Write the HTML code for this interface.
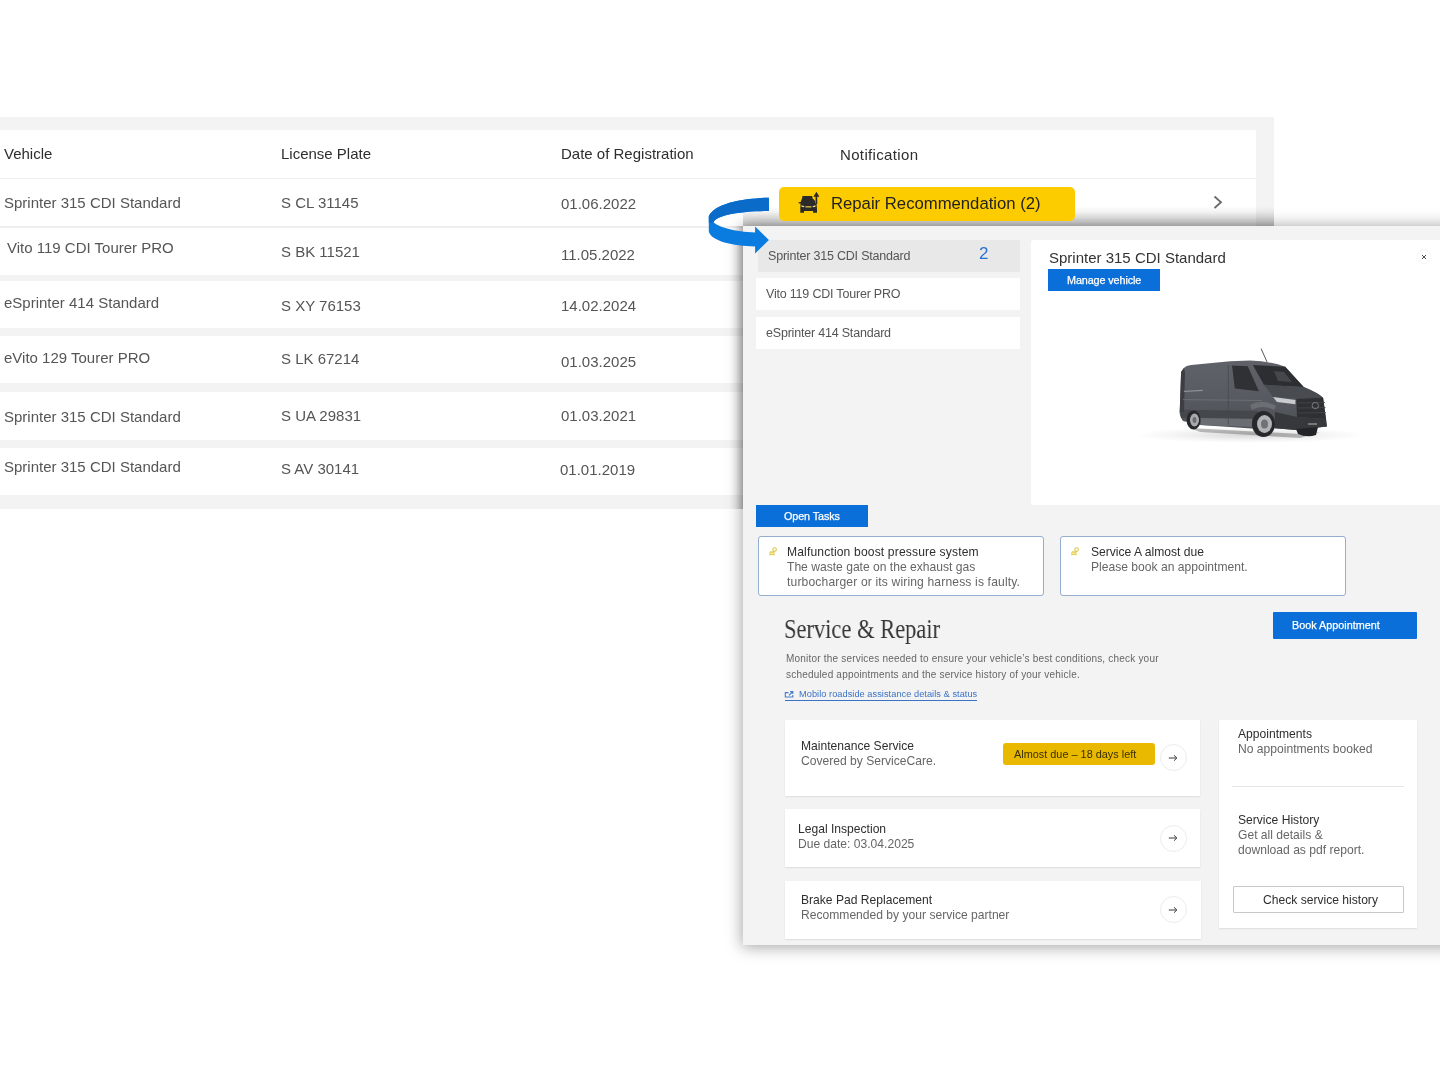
<!DOCTYPE html>
<html><head><meta charset="utf-8">
<style>
*{margin:0;padding:0;box-sizing:border-box}
html,body{width:1440px;height:1080px;overflow:hidden;background:#fff}
body{position:relative;font-family:"Liberation Sans",sans-serif;color:#333}
.a{position:absolute}
.t{position:absolute;white-space:pre;line-height:1;will-change:transform}
.bx{position:absolute}
/* table */
#band{left:0;top:117px;width:1274px;height:392px;background:#f3f3f3}
.row{position:absolute;left:0;width:1256px;background:#fff}
.hd{font-size:15px;color:#2e2e2e}
.cell{font-size:15px;color:#555}
/* popup */
#pop{z-index:1;left:743px;top:226px;width:760px;height:719px;background:#f3f3f3;box-shadow:0 1px 15px 1px rgba(0,0,0,.36)}
.li{position:absolute;background:#fff}
.lt{font-size:12.5px;letter-spacing:-.2px;color:#555}
.btn{position:absolute;background:#0a6fd8}
.bt{font-size:10.8px;letter-spacing:-.1px;font-weight:400;color:#fff;-webkit-text-stroke:.25px #fff}
.card{position:absolute;background:#fff;box-shadow:0 1px 1.5px rgba(0,0,0,.09)}
.ct{font-size:12.1px;color:#2e2e2e}
.cs{font-size:12.1px;color:#666}
.circ{position:absolute;width:27px;height:27px;border-radius:50%;border:1px solid #ececec;background:#fff}
</style></head><body>

<div class="bx" id="band"></div>
<div class="row" style="top:130px;height:48px"></div>
<div class="row" style="top:177.5px;height:2px;background:#eeeeee"></div>
<div class="row" style="top:179px;height:48px"></div>
<div class="row" style="top:226px;height:2px;background:#efefef"></div>
<div class="row" style="top:228px;height:47px"></div>
<div class="row" style="top:281px;height:46.5px"></div>
<div class="row" style="top:336px;height:47px"></div>
<div class="row" style="top:392px;height:47.5px"></div>
<div class="row" style="top:448px;height:46.5px"></div>

<!-- header -->
<div class="t hd" style="left:4px;top:146px">Vehicle</div>
<div class="t hd" style="left:281px;top:146px">License Plate</div>
<div class="t hd" style="left:561px;top:146px">Date of Registration</div>
<div class="t hd" style="left:840px;top:147px;letter-spacing:.35px">Notification</div>

<!-- rows -->
<div class="t cell" style="left:4px;top:194.5px">Sprinter 315 CDI Standard</div>
<div class="t cell" style="left:281px;top:194.5px">S CL 31145</div>
<div class="t cell" style="left:561px;top:196px">01.06.2022</div>

<div class="t cell" style="left:6.5px;top:239.8px">Vito 119 CDI Tourer PRO</div>
<div class="t cell" style="left:281px;top:243.7px">S BK 11521</div>
<div class="t cell" style="left:561px;top:247px">11.05.2022</div>

<div class="t cell" style="left:4px;top:295px">eSprinter 414 Standard</div>
<div class="t cell" style="left:281px;top:298px">S XY 76153</div>
<div class="t cell" style="left:561px;top:298px">14.02.2024</div>

<div class="t cell" style="left:4px;top:350px">eVito 129 Tourer PRO</div>
<div class="t cell" style="left:281px;top:350.5px">S LK 67214</div>
<div class="t cell" style="left:561px;top:353.8px">01.03.2025</div>

<div class="t cell" style="left:4px;top:409px">Sprinter 315 CDI Standard</div>
<div class="t cell" style="left:281px;top:408px">S UA 29831</div>
<div class="t cell" style="left:561px;top:407.8px">01.03.2021</div>

<div class="t cell" style="left:4px;top:459px">Sprinter 315 CDI Standard</div>
<div class="t cell" style="left:281px;top:460.7px">S AV 30141</div>
<div class="t cell" style="left:560px;top:461.8px">01.01.2019</div>

<!-- chevron -->
<svg class="a" style="left:1210px;top:193px" width="16" height="18" viewBox="0 0 16 18"><path d="M4.5 3.5 L11 9.2 L4.5 15" fill="none" stroke="#6a6a6a" stroke-width="1.8"/></svg>

<!-- popup -->
<div class="bx" style="left:730px;top:226px;width:13px;height:283px;background:linear-gradient(90deg,rgba(0,0,0,0) 0%,rgba(0,0,0,.05) 45%,rgba(0,0,0,.17) 85%,rgba(0,0,0,.22) 100%);z-index:1"></div>
<div class="bx" style="left:743px;top:206px;width:531px;height:20px;background:linear-gradient(180deg,rgba(0,0,0,0) 0%,rgba(0,0,0,.03) 25%,rgba(0,0,0,.08) 45%,rgba(0,0,0,.17) 80%,rgba(0,0,0,.23) 100%);z-index:1"></div>
<div class="bx" id="pop"></div>


<!-- popup contents -->
<div class="li" style="left:758px;top:239.5px;width:262px;height:32.5px;background:#e8e8e8;z-index:2"></div>
<div class="li" style="left:755.5px;top:277.5px;width:264.5px;height:32.5px;z-index:2"></div>
<div class="li" style="left:755.5px;top:316.5px;width:264.5px;height:32.5px;z-index:2"></div>
<div class="t lt" style="left:768px;top:249.6px;z-index:3">Sprinter 315 CDI Standard</div>
<div class="t lt" style="left:765.5px;top:288.2px;z-index:3">Vito 119 CDI Tourer PRO</div>
<div class="t lt" style="left:765.5px;top:326.7px;z-index:3">eSprinter 414 Standard</div>
<div class="t" style="left:979px;top:245.4px;font-size:17px;color:#2a72cf;z-index:3">2</div>

<div class="bx" style="left:1030.5px;top:239.5px;width:420px;height:265.5px;background:#fff;border-radius:3px;z-index:2"></div>
<div class="t" style="left:1049px;top:249.6px;font-size:15px;color:#333;z-index:3">Sprinter 315 CDI Standard</div>
<div class="btn" style="left:1048px;top:269.3px;width:112px;height:21.4px;z-index:3"></div>
<div class="t bt" style="left:1067px;top:274.6px;z-index:4">Manage vehicle</div>
<div class="bx" style="left:1417px;top:249px;width:14px;height:15px;border-radius:50%;border:1px solid #f6f6f6;z-index:3"></div>
<svg class="a" style="left:1419px;top:251.5px;z-index:4" width="10" height="10" viewBox="0 0 10 10"><path d="M3 3 L7 7 M7 3 L3 7" stroke="#3a3a3a" stroke-width=".9"/></svg>

<div class="btn" style="left:755.5px;top:504.5px;width:112.5px;height:22.3px;z-index:2"></div>
<div class="t bt" style="left:783.8px;top:510.5px;z-index:3">Open Tasks</div>

<div class="bx" style="left:757.5px;top:536.3px;width:286.5px;height:59.5px;background:#fff;border:1px solid #95adcf;border-radius:3px;z-index:2"></div>
<div class="bx" style="left:1059.7px;top:536.3px;width:286px;height:59.5px;background:#fff;border:1px solid #95adcf;border-radius:3px;z-index:2"></div>
<div class="t ct" style="left:787.4px;top:546.2px;letter-spacing:.15px;z-index:3">Malfunction boost pressure system</div>
<div class="t cs" style="left:787.4px;top:561.1px;z-index:3">The waste gate on the exhaust gas</div>
<div class="t cs" style="left:787.4px;top:576.3px;letter-spacing:.15px;z-index:3">turbocharger or its wiring harness is faulty.</div>
<div class="t ct" style="left:1091.3px;top:546.2px;z-index:3">Service A almost due</div>
<div class="t cs" style="left:1091.3px;top:561.1px;z-index:3">Please book an appointment.</div>

<div class="t" style="left:783.6px;top:614.6px;font-family:'Liberation Serif',serif;font-size:28px;color:#363636;transform:scaleX(.803);transform-origin:0 0;z-index:3">Service &amp; Repair</div>
<div class="t" style="left:785.6px;top:653.5px;font-size:10px;letter-spacing:.2px;color:#666;z-index:3">Monitor the services needed to ensure your vehicle’s best conditions, check your</div>
<div class="t" style="left:785.6px;top:669.9px;font-size:10px;letter-spacing:.2px;color:#666;z-index:3">scheduled appointments and the service history of your vehicle.</div>
<div class="t" style="left:799.2px;top:689.9px;font-size:9.2px;letter-spacing:.06px;color:#3a72c4;z-index:3">Mobilo roadside assistance details &amp; status</div>
<div class="bx" style="left:785px;top:699.5px;width:192px;height:1px;background:#3a72c4;z-index:3"></div>

<div class="btn" style="left:1273px;top:611.5px;width:144px;height:27.3px;border-radius:1px;z-index:2"></div>
<div class="t bt" style="left:1292px;top:619.7px;letter-spacing:0;z-index:3">Book Appointment</div>

<div class="card" style="left:784.7px;top:719.8px;width:415.8px;height:76.3px;z-index:2"></div>
<div class="card" style="left:784.7px;top:809px;width:415.8px;height:58px;z-index:2"></div>
<div class="card" style="left:785px;top:880.7px;width:415.5px;height:58px;z-index:2"></div>
<div class="card" style="left:1218.7px;top:719.6px;width:198.5px;height:208px;z-index:2"></div>

<div class="t ct" style="left:800.8px;top:739.9px;z-index:3">Maintenance Service</div>
<div class="t cs" style="left:800.8px;top:754.9px;z-index:3">Covered by ServiceCare.</div>
<div class="bx" style="left:1002.5px;top:743.2px;width:152.5px;height:21.5px;background:#e9b900;border-radius:3px;z-index:3"></div>
<div class="t" style="left:1013.6px;top:748.7px;font-size:10.9px;color:#3a3000;z-index:4">Almost due – 18 days left</div>
<div class="circ" style="left:1159.5px;top:744.2px;z-index:3"></div>
<div class="t ct" style="left:797.6px;top:822.6px;z-index:3">Legal Inspection</div>
<div class="t cs" style="left:797.6px;top:837.5px;z-index:3">Due date: 03.04.2025</div>
<div class="circ" style="left:1159.5px;top:824.5px;z-index:3"></div>
<div class="t ct" style="left:800.9px;top:893.7px;z-index:3">Brake Pad Replacement</div>
<div class="t cs" style="left:800.9px;top:908.7px;z-index:3">Recommended by your service partner</div>
<div class="circ" style="left:1159.5px;top:895.9px;z-index:3"></div>

<div class="t ct" style="left:1237.9px;top:727.9px;z-index:3">Appointments</div>
<div class="t cs" style="left:1237.9px;top:742.8px;z-index:3">No appointments booked</div>
<div class="bx" style="left:1232px;top:786.2px;width:171.5px;height:1px;background:#e6e6e6;z-index:3"></div>
<div class="t ct" style="left:1237.9px;top:813.7px;z-index:3">Service History</div>
<div class="t cs" style="left:1237.9px;top:828.6px;z-index:3">Get all details &amp;</div>
<div class="t cs" style="left:1237.9px;top:844px;z-index:3">download as pdf report.</div>
<div class="bx" style="left:1232.6px;top:886px;width:171.2px;height:27.4px;border:1px solid #c9c9c9;border-radius:1px;z-index:3"></div>
<div class="t ct" style="left:1263.2px;top:893.6px;z-index:4">Check service history</div>


<!-- van -->
<svg class="a" style="left:1120px;top:340px;z-index:3" width="250" height="115" viewBox="1120 340 250 115">
<defs>
<radialGradient id="shd" cx="0.5" cy="0.5" r="0.5"><stop offset="0" stop-color="#000" stop-opacity=".55"/><stop offset=".6" stop-color="#000" stop-opacity=".18"/><stop offset="1" stop-color="#000" stop-opacity="0"/></radialGradient>
<linearGradient id="body" x1="0" y1="0" x2="0" y2="1"><stop offset="0" stop-color="#5f6268"/><stop offset=".5" stop-color="#585b61"/><stop offset="1" stop-color="#4c4f54"/></linearGradient>
</defs>
<ellipse cx="1250" cy="435" rx="115" ry="8" fill="url(#shd)" opacity=".28"/>
<path d="M1190 428 L1300 434 L1320 432 L1300 438 L1200 432 Z" fill="#000" opacity=".25"/>
<!-- antenna -->
<path d="M1261.1 348.7 L1267.1 362.1" stroke="#555" stroke-width="1"/>
<!-- side body -->
<path d="M1183.9 368.1 Q1186 365.5 1191.3 364.9 L1230 361.2 L1250 360.4 Q1270 361 1285.2 366.8 L1303.7 387.1 Q1318 393 1323.1 397.8 L1326 419 L1326.9 426.5 L1296 430 L1275 428.3 L1252 428.5 L1200.5 425 L1183 421 Q1179.5 416 1179.7 412.6 L1181.1 372 Z" fill="url(#body)"/>
<!-- lower darker band -->
<path d="M1181 409.8 L1258 411 L1258 418.5 L1181 418.1 Z" fill="#44474c"/>
<path d="M1200 418 L1252 419 L1252 427 L1200.5 425 Z" fill="#6a6d72"/>
<!-- rear panel darker edge -->
<path d="M1181.1 372 L1183.9 368.1 L1185 372 L1184 412 L1179.7 412.6 Z" fill="#3c3e42"/>
<!-- character line -->
<path d="M1183 399.6 L1262 400.5" stroke="#6e7176" stroke-width=".9"/>
<path d="M1228.3 365 L1228.3 425" stroke="#45484c" stroke-width=".7"/>
<path d="M1183.9 391.3 L1202.9 390.4" stroke="#8d9095" stroke-width="1.3"/>
<!-- side window -->
<path d="M1232 365.4 L1247.8 366.3 L1258.9 391.3 L1234.8 388.5 Z" fill="#2f3135"/>
<!-- windshield -->
<path d="M1252.8 364.9 L1285.2 366.8 L1303.7 387.1 L1263.9 384.8 Z" fill="#2c2e32"/>
<path d="M1274 371 L1284 372 L1292 382 L1278 381 Z" fill="#45474b"/>
<!-- hood -->
<path d="M1263.9 384.8 L1303.7 387.1 Q1318 393 1323.1 397.8 L1296.3 398.7 L1273 396.9 Z" fill="#484b50"/>
<!-- fender highlight -->
<path d="M1250 405 Q1262 398 1276 406 L1274 410 Q1262 404 1252 410 Z" fill="#6b6e73"/>
<!-- headlight -->
<path d="M1273 396.9 L1295.4 400 L1295.4 404.3 L1277 402 Z" fill="#c9cbce"/>
<!-- grille -->
<path d="M1296.3 398.7 L1323.1 397.8 L1326 419 L1297 417 Z" fill="#2e3034"/>
<path d="M1298 403 L1325 402.5 M1298 408 L1325.5 407.5 M1298 413 L1325.8 412.5" stroke="#45474b" stroke-width=".8"/>
<circle cx="1315.3" cy="405.6" r="3.2" fill="none" stroke="#8a8c90" stroke-width=".8"/>
<!-- front bumper -->
<path d="M1275 412 L1297 417 L1326 419 L1326.9 426.5 L1296 430 L1275 428.3 Z" fill="#36383c"/>
<rect x="1308" y="423" width="9" height="2" fill="#777"/>
<!-- wheels -->
<ellipse cx="1193.6" cy="420" rx="7" ry="9.5" fill="#26282b"/>
<ellipse cx="1194.5" cy="420" rx="4.5" ry="6.5" fill="#a7a9ac"/>
<ellipse cx="1194.5" cy="420" rx="2" ry="3" fill="#6b6d70"/>
<path d="M1296 429 L1318 427 L1316 435 Q1307 438 1298 434 Z" fill="#222427"/>
<ellipse cx="1263.5" cy="424" rx="11.5" ry="13" fill="#26282b"/>
<ellipse cx="1264.5" cy="424" rx="7.5" ry="9" fill="#b1b3b6"/>
<ellipse cx="1264.5" cy="424" rx="3.5" ry="4.5" fill="#707275"/>
</svg>

<!-- badge -->
<div class="bx" style="left:779px;top:187px;width:296px;height:34px;background:#fdcc00;border-radius:5px;z-index:3"></div>
<div class="t" style="left:831px;top:196.2px;font-size:16.7px;color:#222;z-index:4">Repair Recommendation (2)</div>


<!-- blue curved arrow -->
<svg class="a" style="left:700px;top:190px;z-index:6" width="80" height="70" viewBox="700 190 80 70">
<path d="M768.9,197.8 C748,198.2 716,202 708.8,216 L708.8,231.5 C711,241 733,246.2 755.1,246.4 L755.1,253.5 L768.9,239.9 L755.1,226.6 L755.1,232.5 C735,232 717,227 713.6,222.1 C718,214 745,211.2 768.9,211.1 Z" fill="#0a7ce0"/>
<path d="M768.9,197.8 C748,198.2 716,202 708.8,216 L708.8,222.5 C710.5,224 712,223 713.6,222.1 C718,214 745,211.2 768.9,211.1 Z" fill="#0a6cc8"/>
</svg>

<!-- badge car icon -->
<svg class="a" style="left:792px;top:187px;z-index:5" width="40" height="30" viewBox="792 187 40 30">
<path d="M802.5 196 L812 196 L813.5 199 Q815.5 200.5 816 203 L816.5 203.2 L817 209 L817 212.8 L813 212.8 L813 211 L804 211 L804 212.8 L800.3 212.8 L800.3 209 L800.5 203.5 L798.5 203.3 L798.5 202.2 L800.6 202 L802 198.5 Z" fill="#2a2a2a"/>
<path d="M801.5 205.3 L804.5 206.3 L804 207.3 L801.5 206.8 Z M815.5 205.3 L812.5 206.3 L813 207.3 L815.5 206.8 Z" fill="#f3dc80"/>
<rect x="805.5" y="206" width="6" height="1.6" fill="#b9a23a"/>
<path d="M812.6 197.6 Q816.3 199 816.3 203.5 L816.3 195.5" fill="none" stroke="#fdcc00" stroke-width="1.6"/>
<path d="M816.4 204 L816.4 195.2" stroke="#2a2a2a" stroke-width="1.7"/>
<path d="M813.4 196.8 L816.4 191.8 L819.4 196.8 Z" fill="#2a2a2a"/>
</svg>

<!-- task icons -->
<svg class="a" style="left:767.5px;top:546px;z-index:4" width="11" height="11" viewBox="0 0 11 11"><path d="M2 5.2 L5.8 5.2 L6.6 6.6 L6.6 9.6 L5.6 9.6 L5.6 9 L2.4 9 L2.4 9.6 L1.3 9.6 L1.3 6.6 Z" fill="#e6cf5a"/><rect x="2" y="6.8" width="3.6" height=".9" fill="#fff3b0"/><circle cx="6.6" cy="3.6" r="1.8" fill="none" stroke="#dcc452" stroke-width="1.1"/></svg>
<svg class="a" style="left:1070px;top:546px;z-index:4" width="11" height="11" viewBox="0 0 11 11"><path d="M2 5.2 L5.8 5.2 L6.6 6.6 L6.6 9.6 L5.6 9.6 L5.6 9 L2.4 9 L2.4 9.6 L1.3 9.6 L1.3 6.6 Z" fill="#e6cf5a"/><rect x="2" y="6.8" width="3.6" height=".9" fill="#fff3b0"/><circle cx="6.6" cy="3.6" r="1.8" fill="none" stroke="#dcc452" stroke-width="1.1"/></svg>

<!-- link icon -->
<svg class="a" style="left:780px;top:686px;z-index:4" width="16" height="14" viewBox="780 686 16 14"><path d="M788.5 692.6 L785.3 692.6 L785.3 697 L792.8 697 L792.8 695" fill="none" stroke="#4a7cc6" stroke-width="1.1"/><path d="M789 695.3 L792.3 692 M790.2 691.6 L792.8 691.6 L792.8 694" fill="none" stroke="#4a7cc6" stroke-width="1.1"/></svg>

<!-- circle arrows -->
<svg class="a" style="left:1165px;top:752px;z-index:4" width="16" height="12" viewBox="0 0 16 12"><path d="M3.8 6 L11.8 6 M9 3.3 L11.8 6 L9 8.7" fill="none" stroke="#3a3a3a" stroke-width="1"/></svg>
<svg class="a" style="left:1165px;top:832px;z-index:4" width="16" height="12" viewBox="0 0 16 12"><path d="M3.8 6 L11.8 6 M9 3.3 L11.8 6 L9 8.7" fill="none" stroke="#3a3a3a" stroke-width="1"/></svg>
<svg class="a" style="left:1165px;top:903.5px;z-index:4" width="16" height="12" viewBox="0 0 16 12"><path d="M3.8 6 L11.8 6 M9 3.3 L11.8 6 L9 8.7" fill="none" stroke="#3a3a3a" stroke-width="1"/></svg>

</body></html>
